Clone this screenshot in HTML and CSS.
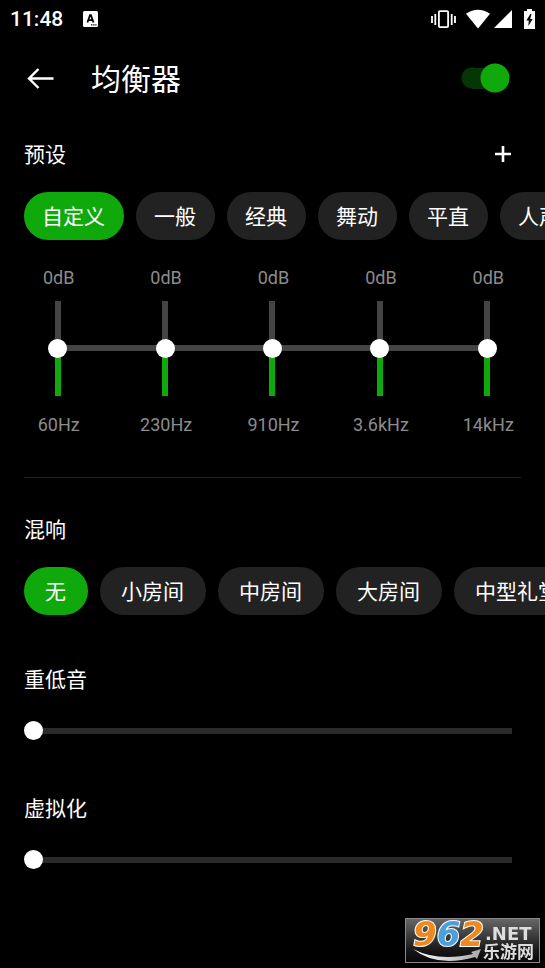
FILE: index.html
```html
<!DOCTYPE html>
<html lang="zh-CN">
<head>
<meta charset="utf-8">
<meta name="viewport" content="width=device-width, initial-scale=1">
<title>均衡器</title>
<link rel="stylesheet" href="styles.css">
</head>
<body>
<div class="status">
  <time class="clock">11:48</time>
  <svg class="note" width="15" height="16" viewBox="0 0 15 16" aria-hidden="true">
    <rect width="15" height="16" rx="1.5" fill="#fff"/>
    <path d="M4.4 11.5 7 4.2h.9l2.6 7.3M5.3 9.2h4.3" fill="none" stroke="#000" stroke-width="1.8"/>
    <path d="M8 13.2h1.4v1.4H8zM10.2 13.2h1.4v1.4h-1.4zM12.3 13.2h1.2v1.4h-1.2z" fill="#000"/>
  </svg>
  <div class="status-icons">
    <svg width="25" height="20" viewBox="0 0 25 20" aria-hidden="true">
      <rect x="7.9" y="2.1" width="9.2" height="16" rx="1" fill="none" stroke="#fff" stroke-width="1.8"/>
      <path d="M1 7v7M4.3 5v11M20.7 5v11M24 7v7" stroke="#fff" stroke-width="1.8"/>
    </svg>
    <svg class="wifi" width="24" height="20" viewBox="0 0 24 20" aria-hidden="true">
      <path d="M0 4.8Q12-3.2 24 4.8L12 19.4z" fill="#fff"/>
    </svg>
    <svg class="signal" width="18" height="18" viewBox="0 0 18 18" aria-hidden="true">
      <path d="M18 0v18H0z" fill="#fff"/>
    </svg>
    <svg class="battery" width="11" height="20" viewBox="0 0 11 20" aria-hidden="true">
      <path d="M3 0h5v2h3v18H0V2h3z" fill="#fff"/>
      <path d="M6.3 5 2.4 11.6h2.4L4.3 17l4.4-7H6.2L7.5 5z" fill="#000"/>
    </svg>
  </div>
</div>

<header class="header">
  <button class="back" type="button" aria-label="返回">
    <svg width="28" height="22" viewBox="0 0 28 22" aria-hidden="true">
      <path d="M26.5 11.5H2M11.5 2 2 11.5l9.5 9.5" fill="none" stroke="#fff" stroke-width="2.4"/>
    </svg>
  </button>
  <h1 class="title">均衡器</h1>
  <input class="switch" type="checkbox" role="switch" aria-label="均衡器" checked>
</header>

<main>
  <section>
    <div class="heading-row">
      <h2 class="heading">预设</h2>
      <button class="add" type="button" aria-label="添加">
        <svg width="16" height="16" viewBox="0 0 16 16" aria-hidden="true">
          <path d="M8 0v16M0 8h16" stroke="#fff" stroke-width="2.6"/>
        </svg>
      </button>
    </div>
    <div class="chips">
      <button class="chip selected" type="button" aria-pressed="true">自定义</button>
      <button class="chip" type="button">一般</button>
      <button class="chip" type="button">经典</button>
      <button class="chip" type="button">舞动</button>
      <button class="chip" type="button">平直</button>
      <button class="chip" type="button">人声</button>
    </div>
    <div class="bands">
      <div class="band"><output>0dB</output><input class="fader" id="b1" type="range" min="-15" max="15" value="0"><label for="b1">60Hz</label></div>
      <div class="band"><output>0dB</output><input class="fader" id="b2" type="range" min="-15" max="15" value="0"><label for="b2">230Hz</label></div>
      <div class="band"><output>0dB</output><input class="fader" id="b3" type="range" min="-15" max="15" value="0"><label for="b3">910Hz</label></div>
      <div class="band"><output>0dB</output><input class="fader" id="b4" type="range" min="-15" max="15" value="0"><label for="b4">3.6kHz</label></div>
      <div class="band"><output>0dB</output><input class="fader" id="b5" type="range" min="-15" max="15" value="0"><label for="b5">14kHz</label></div>
    </div>
  </section>
  <hr class="divider">
  <section>
    <div class="heading-row">
      <h2 class="heading">混响</h2>
    </div>
    <div class="chips roomy">
      <button class="chip selected" type="button" aria-pressed="true">无</button>
      <button class="chip" type="button">小房间</button>
      <button class="chip" type="button">中房间</button>
      <button class="chip" type="button">大房间</button>
      <button class="chip" type="button">中型礼堂</button>
    </div>
  </section>
  <div class="levels">
    <div class="level">
      <label class="heading" for="bass">重低音</label>
      <input class="slider" id="bass" type="range" min="0" max="100" value="0">
    </div>
    <div class="level">
      <label class="heading" for="virtual">虚拟化</label>
      <input class="slider" id="virtual" type="range" min="0" max="100" value="0">
    </div>
  </div>
</main>

<svg class="watermark" width="135" height="45" viewBox="0 0 135 45" role="img" aria-label="962.NET 乐游网">
  <defs>
    <linearGradient id="plate" x1="0" y1="0" x2="0" y2="1">
      <stop offset="0" stop-color="#686868"/>
      <stop offset="0.75" stop-color="#151515"/>
      <stop offset="1" stop-color="#080808"/>
    </linearGradient>
    <linearGradient id="swoosh" x1="0" y1="0" x2="1" y2="0">
      <stop offset="0" stop-color="#fff"/>
      <stop offset="1" stop-color="#aaa"/>
    </linearGradient>
  </defs>
  <rect x="0.5" y="0.5" width="134" height="44" fill="url(#plate)" stroke="#898989"/>
  <path d="M8 31Q33 44 68 36L66 34 76 31 72 41 70 39Q32 50 8 31z" fill="url(#swoosh)"/>
  <text class="digits" x="8" y="28"><tspan fill="#ee8a1d">9</tspan><tspan fill="#4ba0dc">6</tspan><tspan fill="#ee8a1d">2</tspan></text>
  <text class="domain" x="80" y="22">.NET</text>
  <text class="site" x="78" y="40">乐游网</text>
</svg>
</body>
</html>
```
FILE: styles.css
```css
* {
  box-sizing: border-box;
}

body {
  margin: 0;
  min-height: 100vh;
  background: #000;
  color: #fff;
  font-family: Roboto, "Noto Sans CJK SC", sans-serif;
  overflow-x: hidden;
}

button {
  border: 0;
  padding: 0;
  background: none;
  color: inherit;
  font: inherit;
}

svg {
  display: block;
}

.status {
  display: flex;
  align-items: center;
  height: 38px;
  padding: 0 10px;
}

.clock {
  font-size: 21px;
  font-weight: 500;
}

.note {
  margin-left: 20px;
}

.status-icons {
  display: flex;
  align-items: center;
  margin-left: auto;
}

.wifi {
  margin-left: 10px;
}

.signal {
  margin-left: 4px;
}

.battery {
  margin-left: 12px;
}

.header {
  display: flex;
  align-items: center;
  height: 80px;
  padding: 0 35px 0 27px;
}

.title {
  margin: 0 0 0 36px;
  padding-top: 4px;
  font-size: 30px;
  font-weight: 400;
  line-height: 40px;
}

.switch {
  appearance: none;
  width: 49px;
  height: 30px;
  margin: 0 0 0 auto;
  background:
    radial-gradient(circle at 34px 50%, #10a90c 14px, transparent 15px),
    radial-gradient(circle at 11px 50%, #053605 10px, transparent 11px),
    linear-gradient(#053605, #053605) 11px 50% / 22px 21px no-repeat;
}

.heading-row {
  display: flex;
  align-items: center;
  justify-content: space-between;
  margin: 20px 34px 22px 24px;
}

.heading {
  display: block;
  margin: 0;
  padding-top: 2px;
  font-size: 21px;
  font-weight: 400;
  line-height: 30px;
}

.chips {
  display: flex;
  gap: 12px;
  padding-left: 24px;
  overflow: hidden;
}

.chip {
  flex: none;
  height: 48px;
  padding: 2px 19px 0 18px;
  border-radius: 24px;
  background: #222;
  font-size: 21px;
  line-height: 46px;
}

.chip.selected {
  background: #10a90c;
}

.roomy .chip {
  padding: 2px 22px 0 21px;
}

.bands {
  display: grid;
  grid-template-columns: repeat(5, 1fr);
  padding: 26px 4px 0;
  background: linear-gradient(#444, #444) 50% 79px / 80% 6px no-repeat content-box;
}

.band {
  display: flex;
  flex-direction: column;
  align-items: center;
  color: #8c8c8c;
  font-size: 18px;
  line-height: 24px;
}

.band output,
.band label {
  padding-left: 2px;
}

.fader,
.slider {
  appearance: none;
  display: block;
}

.fader {
  writing-mode: vertical-lr;
  direction: rtl;
  width: 19px;
  height: 95px;
  margin: 11px 0 17px;
  background: linear-gradient(#444 50%, #10a90c 50%) 50% 0 / 6px 100% no-repeat;
}

.slider {
  width: 100%;
  height: 19px;
  margin: 26px 0 0;
  background: linear-gradient(#2a2a2a, #2a2a2a) 10px 50% / 100% 6px no-repeat;
}

.fader::-webkit-slider-thumb,
.slider::-webkit-slider-thumb {
  appearance: none;
  width: 19px;
  height: 19px;
  border-radius: 50%;
  background: #fff;
}

.divider {
  height: 1px;
  margin: 40px 24px 35px;
  border: 0;
  background: #222;
}

.divider + section .heading-row {
  margin-top: 0;
}

.levels {
  display: grid;
  gap: 52px;
  padding: 48px 33px 0 24px;
}

.watermark {
  position: fixed;
  right: 5px;
  bottom: 5px;
}

.digits {
  font: italic bold 34px "DejaVu Sans", sans-serif;
  stroke: #fff;
  stroke-width: 2px;
  paint-order: stroke;
}

.domain {
  font: bold 18px "DejaVu Sans", sans-serif;
  fill: #ddd;
}

.site {
  font: bold 17px "Noto Sans CJK SC", sans-serif;
  fill: #ddd;
}
```
